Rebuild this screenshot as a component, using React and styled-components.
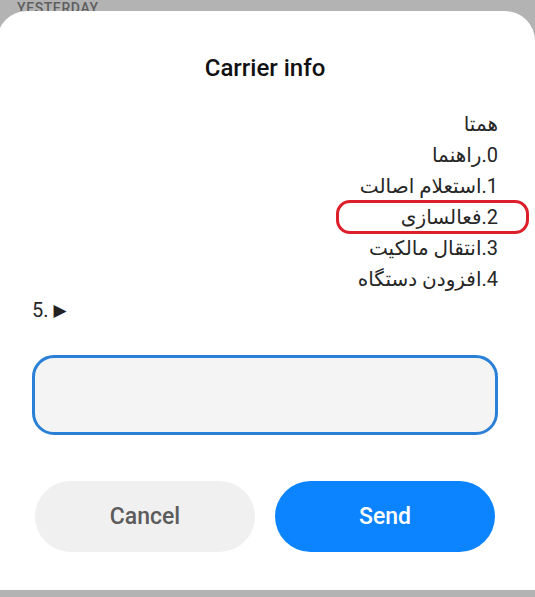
import React, { useState } from 'react';
import styled, { createGlobalStyle } from 'styled-components';

const GlobalStyle = createGlobalStyle`
  html, body {
    margin: 0;
    padding: 0;
    background: #b3b3b3;
  }
  * {
    box-sizing: border-box;
  }
`;

const lines = [
  { text: 'همتا' },
  { text: '0.راهنما' },
  { text: '1.استعلام اصالت' },
  { text: '2.فعالسازی', marked: true },
  { text: '3.انتقال مالکیت' },
  { text: '4.افزودن دستگاه' },
];

const App = () => {
  const [value, setValue] = useState('');

  return (
    <Page>
      <GlobalStyle />
      <DateLabel>YESTERDAY</DateLabel>
      <Sheet>
        <Title>Carrier info</Title>
        <MessageList>
          {lines.map((line, i) => (
            <Line key={i} dir="auto">
              {line.text}
              {line.marked && <Mark />}
            </Line>
          ))}
          <Line dir="ltr">
            5.<Arrow>▶</Arrow>
          </Line>
        </MessageList>
        <Field value={value} onChange={(e) => setValue(e.target.value)} />
        <Actions>
          <ActionButton type="button">Cancel</ActionButton>
          <ActionButton type="button" $primary>Send</ActionButton>
        </Actions>
      </Sheet>
    </Page>
  );
};

const Page = styled.div`
  width: 535px;
  height: 597px;
  overflow: hidden;
  background: #b3b3b3;
  display: flex;
  flex-direction: column;
  font-family: Roboto, "DejaVu Sans", sans-serif;
`;

const DateLabel = styled.div`
  height: 11px;
  overflow: hidden;
  padding: 1px 0 0 17px;
  font-size: 14px;
  line-height: 14px;
  font-weight: 500;
  letter-spacing: 0.6px;
  color: #5e5e5e;
`;

const Sheet = styled.div`
  height: 579px;
  margin-left: -3px;
  background: #fff;
  border-radius: 30px 30px 0 0;
  padding: 42px 37px 0 35px;
  display: flex;
  flex-direction: column;
`;

const Title = styled.h1`
  margin: 0;
  text-align: center;
  font-size: 24px;
  line-height: 30px;
  font-weight: 500;
  color: #111;
`;

const MessageList = styled.div`
  margin-top: 26px;
  display: flex;
  flex-direction: column;
`;

const Line = styled.p`
  position: relative;
  margin: 0;
  text-align: start;
  font-size: 20px;
  line-height: 31px;
  color: #262626;
  unicode-bidi: plaintext;
`;

const Arrow = styled.span`
  margin-left: 5px;
  font-family: "DejaVu Sans", sans-serif;
  font-size: 17px;
  vertical-align: 1px;
  color: #222;
`;

/* hand-drawn highlight around the selected option */
const Mark = styled.span`
  position: absolute;
  top: -2px;
  bottom: -1px;
  right: -31px;
  width: 193px;
  border: 3px solid #dc1f2a;
  border-radius: 14px;
  pointer-events: none;
`;

const Field = styled.input`
  margin-top: 29px;
  height: 80px;
  width: 100%;
  border: 3px solid #2a7fd6;
  border-radius: 22px;
  background: #f4f4f4;
  outline: none;
  padding: 0 18px;
  font-size: 20px;
  font-family: inherit;
`;

const Actions = styled.div`
  margin-top: 46px;
  padding: 0 3px;
  display: flex;
  gap: 20px;
`;

const ActionButton = styled.button`
  flex: 1;
  height: 71px;
  border: none;
  border-radius: 36px;
  font-family: inherit;
  font-size: 23px;
  font-weight: 500;
  background: ${(p) => (p.$primary ? '#0d84ff' : '#f0f0f0')};
  color: ${(p) => (p.$primary ? '#fff' : '#5c5c5c')};
  cursor: pointer;
`;

export default App;
